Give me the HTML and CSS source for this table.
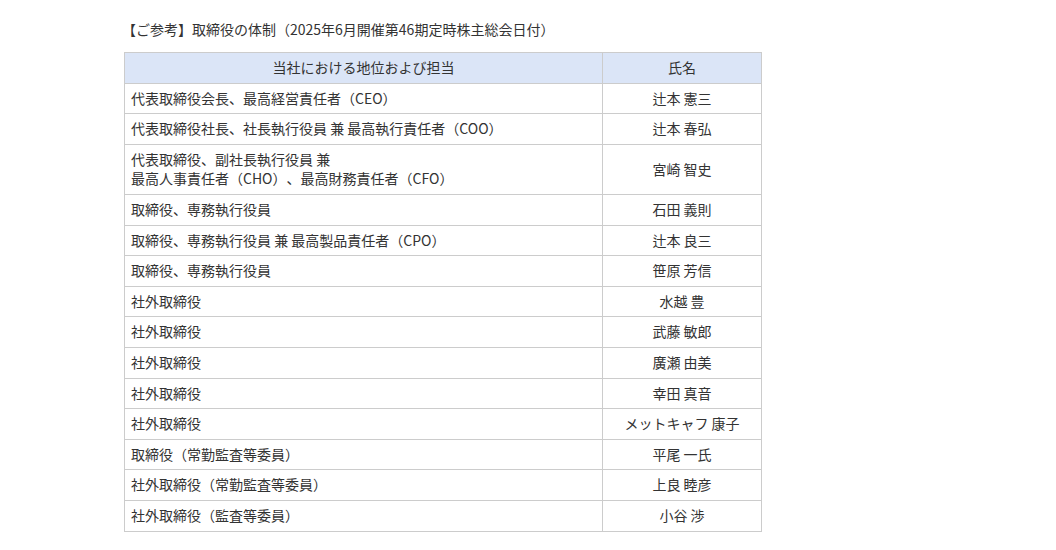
FILE: index.html
```html
<!DOCTYPE html>
<html lang="ja">
<head>
<meta charset="utf-8">
<link rel="stylesheet" href="styles.css">
</head>
<body>
<div class="wrap">
  <p class="title">【ご参考】取締役の体制（2025年6月開催第46期定時株主総会日付）</p>
  <table class="board">
    <thead>
      <tr><th class="c-pos">当社における地位および担当</th><th class="c-name">氏名</th></tr>
    </thead>
    <tbody>
      <tr><td>代表取締役会長、最高経営責任者（CEO）</td><td class="name">辻本 憲三</td></tr>
      <tr><td>代表取締役社長、社長執行役員 兼 最高執行責任者（COO）</td><td class="name">辻本 春弘</td></tr>
      <tr><td>代表取締役、副社長執行役員 兼<br>最高人事責任者（CHO）、最高財務責任者（CFO）</td><td class="name">宮崎 智史</td></tr>
      <tr><td>取締役、専務執行役員</td><td class="name">石田 義則</td></tr>
      <tr><td>取締役、専務執行役員 兼 最高製品責任者（CPO）</td><td class="name">辻本 良三</td></tr>
      <tr><td>取締役、専務執行役員</td><td class="name">笹原 芳信</td></tr>
      <tr><td>社外取締役</td><td class="name">水越 豊</td></tr>
      <tr><td>社外取締役</td><td class="name">武藤 敏郎</td></tr>
      <tr><td>社外取締役</td><td class="name">廣瀬 由美</td></tr>
      <tr><td>社外取締役</td><td class="name">幸田 真音</td></tr>
      <tr><td>社外取締役</td><td class="name">メットキャフ 康子</td></tr>
      <tr><td>取締役（常勤監査等委員）</td><td class="name">平尾 一氏</td></tr>
      <tr><td>社外取締役（常勤監査等委員）</td><td class="name">上良 睦彦</td></tr>
      <tr><td>社外取締役（監査等委員）</td><td class="name">小谷 渉</td></tr>
    </tbody>
  </table>
</div>
</body>
</html>
```
FILE: styles.css
```css
html, body {
  margin: 0;
  padding: 0;
  background: #ffffff;
}
body {
  font-family: "Noto Sans CJK JP", "Noto Sans", sans-serif;
  font-size: 14px;
  color: #333333;
  text-spacing-trim: space-all;
}
.wrap {
  padding: 19px 0 0 124px;
}
.title {
  margin: 0 0 13px -2px;
  line-height: 20px;
}
.board {
  border-collapse: collapse;
  width: 638px;
  line-height: 1.4;
}
.board th,
.board td {
  border: 1px solid #cccccc;
  padding: 5px 6px;
  font-weight: normal;
  text-align: left;
}
.board th {
  background: #dbe5f7;
  text-align: center;
}
.board .c-name {
  width: 146px;
}
.board td.name {
  text-align: center;
}
```
